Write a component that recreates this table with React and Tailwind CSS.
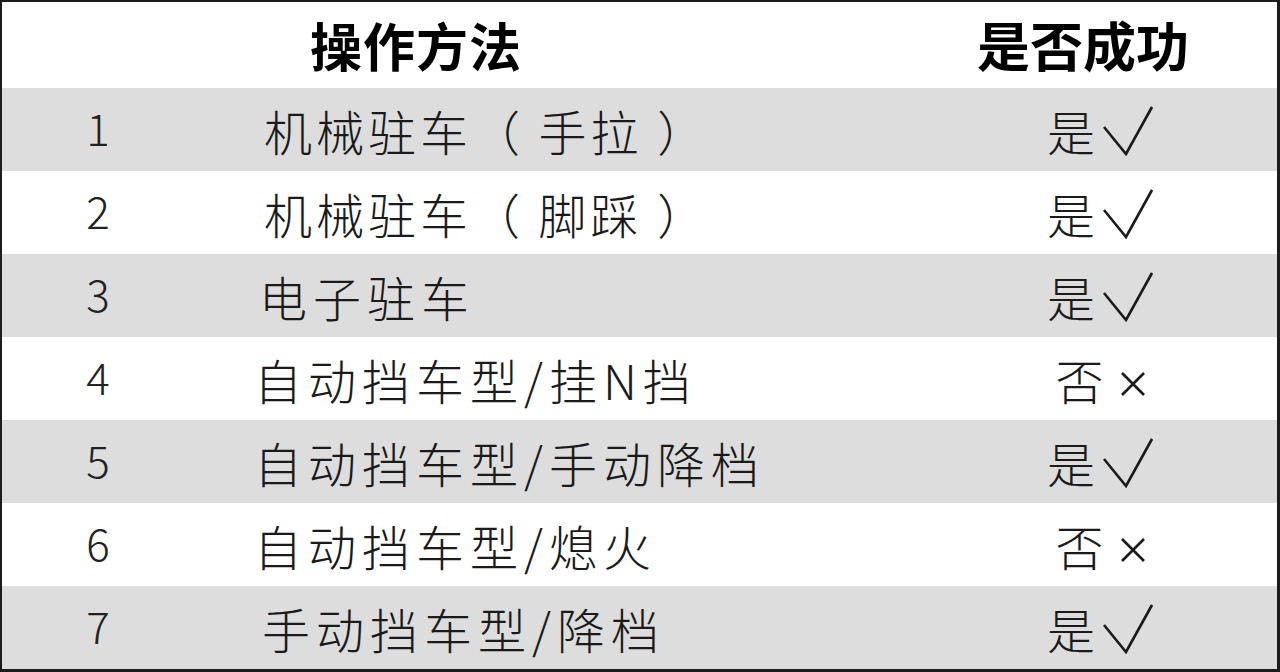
const rows = [
  { n: "1", method: "机械驻车（ 手拉 ）", ok: true, pad: "pl-[70px] tracking-[4px]" },
  { n: "2", method: "机械驻车（ 脚踩 ）", ok: true, pad: "pl-[70px] tracking-[4px]" },
  { n: "3", method: "电子驻车", ok: true, pad: "pl-[65px] tracking-[6px]" },
  { n: "4", method: "自动挡车型/挂N挡", ok: false, pad: "pl-[60px] tracking-[6px]" },
  { n: "5", method: "自动挡车型/手动降档", ok: true, pad: "pl-[60px] tracking-[6px]" },
  { n: "6", method: "自动挡车型/熄火", ok: false, pad: "pl-[60px] tracking-[6px]" },
  { n: "7", method: "手动挡车型/降档", ok: true, pad: "pl-[68px] tracking-[6px]" },
];

const font = { fontFamily: '"Noto Sans CJK SC", "Noto Sans", sans-serif' };

function Check() {
  return (
    <svg width="50" height="50" viewBox="0 0 50 50" className="ml-[8px] mt-[2px]">
      <polyline
        points="1,21 23,48 49,1"
        fill="none"
        stroke="#1a1a1a"
        strokeWidth="2.6"
        strokeLinejoin="miter"
      />
    </svg>
  );
}

function Cross() {
  return (
    <svg width="24" height="24" viewBox="0 0 24 24" className="ml-[17px] mt-[10px]">
      <path d="M1 1 L23 23 M23 1 L1 23" stroke="#1a1a1a" strokeWidth="2.6" fill="none" />
    </svg>
  );
}

function Row({ row, index }) {
  const grey = index % 2 === 0;
  return (
    <div
      className={
        "flex items-center h-[83px] " + (grey ? "bg-[#dddddd]" : "bg-white")
      }
    >
      <div className="w-[192px] mb-[6px] text-center text-[44px] font-light text-[#222]">
        {row.n}
      </div>
      <div
        className={
          "flex-1 text-[48px] font-light text-[#1a1a1a] whitespace-nowrap " + row.pad
        }
      >
        {row.method}
      </div>
      <div className="w-[330px] pr-[24px] flex items-center justify-center text-[48px] font-light text-[#1a1a1a]">
        <span>{row.ok ? "是" : "否"}</span>
        {row.ok ? <Check /> : <Cross />}
      </div>
    </div>
  );
}

export default function App() {
  return (
    <div
      className="w-[1280px] h-[672px] bg-white border-t-2 border-l-2 border-r-[3px] border-b-[3px] border-[#1c1c1c] flex flex-col overflow-hidden"
      style={font}
    >
      <div className="flex items-center h-[86px] bg-white">
        <div className="w-[192px]" />
        <div className="flex-1 pl-[116px] text-[52px] font-bold text-black tracking-[1px]">
          操作方法
        </div>
        <div className="w-[330px] pr-[58px] text-center text-[53px] font-bold text-black">
          是否成功
        </div>
      </div>
      {rows.map((row, i) => (
        <Row key={row.n} row={row} index={i} />
      ))}
    </div>
  );
}
